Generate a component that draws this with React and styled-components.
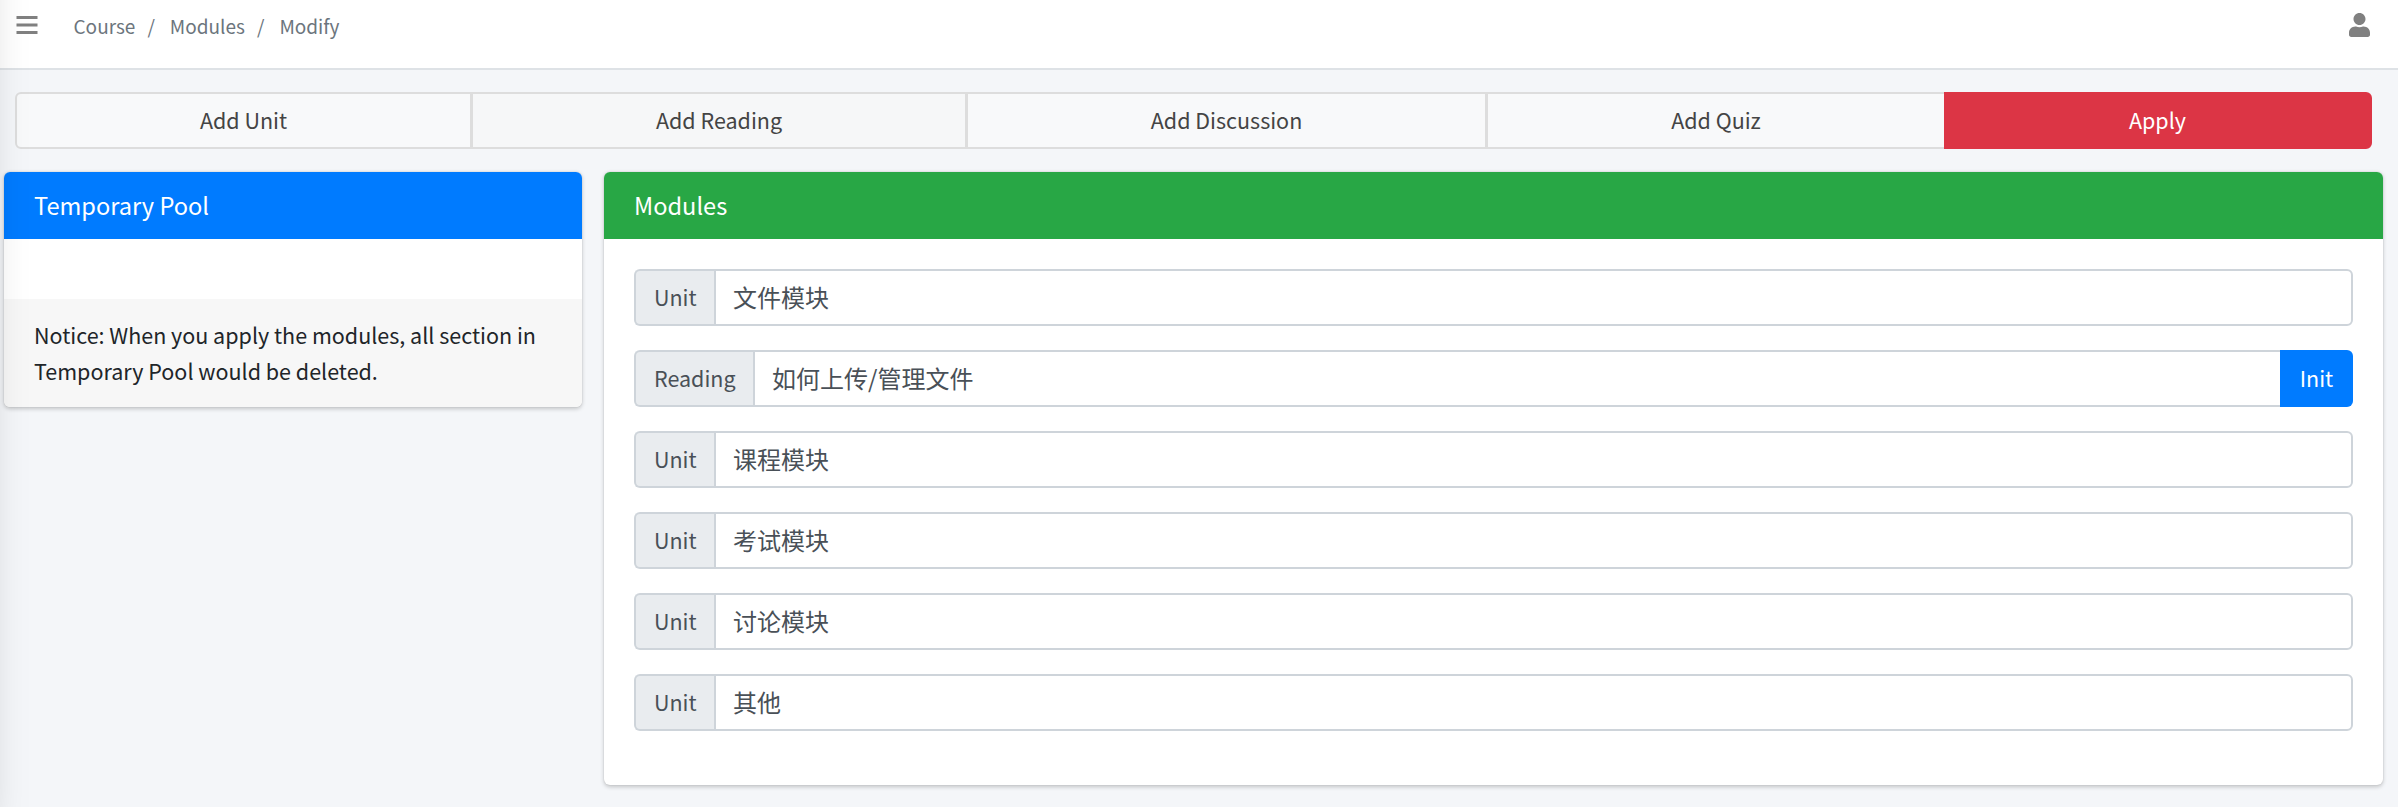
import React from "react";
import styled, { createGlobalStyle, css } from "styled-components";

const GlobalStyle = createGlobalStyle`
  *, *::before, *::after { box-sizing: border-box; }
  body {
    margin: 0;
    background: #f4f6f9;
    color: #212529;
    font-family: "Noto Sans CJK SC", "Noto Sans", sans-serif;
    font-size: 21.5px;
    line-height: 36px;
    overflow: hidden;
  }
`;

const Page = styled.div`
  min-height: 807px;
`;

/* Collapsed off-canvas sidebar; only its shadow reaches the page. */
const Sidebar = styled.aside`
  position: fixed;
  top: -70px;
  bottom: 0;
  left: -394px;
  width: 375px;
  box-shadow: 0 21px 42px rgba(0, 0, 0, 0.25), 0 15px 15px rgba(0, 0, 0, 0.22);
  pointer-events: none;
  z-index: 10;
`;

const Navbar = styled.header`
  display: flex;
  justify-content: space-between;
  height: 70px;
  padding: 0 26px 0 16px;
  background: #fff;
  border-bottom: 2px solid #dee2e6;
`;

const NavStart = styled.div`
  display: flex;
  align-items: flex-start;
`;

const MenuIcon = styled.svg`
  display: block;
  width: 22px;
  height: 20px;
  margin-top: 15px;
  fill: #808080;
`;

const UserIcon = styled.svg`
  display: block;
  width: 21px;
  height: 24px;
  margin: 13px 2px 0 0;
  fill: #808080;
`;

const Breadcrumb = styled.ol`
  display: flex;
  margin: 8px 0 0 35.5px;
  padding: 0;
  list-style: none;
  color: #6c757d;
  font-size: 19px;
  line-height: 36px;
`;

const Crumb = styled.li`
  & + &::before {
    content: "/";
    padding: 0 15px 0 12px;
  }
`;

const ButtonGroup = styled.div`
  display: flex;
  height: 57px;
  margin: 22px 26px 23px 15px;
`;

const ToolButton = styled.button`
  flex: 0 0 ${(p) => p.$width}px;
  margin: 0;
  padding: 0 0 2px;
  border: 2px solid #ddd;
  border-left-width: 1px;
  background: ${(p) => (p.$hover ? "#f6f7f8" : "#f8f9fa")};
  color: #444;
  font: inherit;

  &:first-child {
    border-left-width: 2px;
    border-radius: 6px 0 0 6px;
  }
  &:nth-last-child(2) {
    border-right-width: 0;
  }
  &:last-child {
    border-radius: 0 6px 6px 0;
  }
  ${(p) =>
    p.$danger &&
    css`
      flex: 1;
      background: #dc3545;
      border-color: #dc3545;
      color: #fff;
    `}
`;

const Columns = styled.main`
  display: grid;
  grid-template-columns: 578px 1779px;
  column-gap: 22px;
  align-items: start;
  padding-left: 4px;
`;

const Card = styled.section`
  overflow: hidden;
  border-radius: 6px;
  background: #fff;
  box-shadow: 0 0 1.5px rgba(0, 0, 0, 0.125), 0 1.5px 4.5px rgba(0, 0, 0, 0.2);
`;

const CardHeader = styled.h3`
  height: 67px;
  margin: 0;
  padding: 15px 30px 0;
  background: ${(p) => p.$color};
  color: #fff;
  font-size: 23.6px;
  font-weight: 400;
  line-height: 36px;
`;

const CardBody = styled.div`
  display: flex;
  flex-direction: column;
  gap: 24px;
  height: ${(p) => p.$height}px;
  padding: 30px;
`;

const CardFooter = styled.footer`
  height: 108px;
  padding: 18px 30px;
  background: #f7f7f7;
`;

const ModuleRow = styled.div`
  display: flex;
  height: 57px;
`;

const Label = styled.span`
  display: flex;
  align-items: center;
  flex: 0 0 ${(p) => p.$width}px;
  padding: 0 0 2px 18px;
  border: 2px solid #ced4da;
  border-right: 0;
  border-radius: 6px 0 0 6px;
  background: #e9ecef;
  color: #495057;
`;

const Field = styled.div`
  display: flex;
  align-items: center;
  flex: 1;
  padding: 0 0 1px 17px;
  border: 2px solid #ced4da;
  border-right-width: ${(p) => (p.$joined ? 0 : 2)}px;
  border-radius: ${(p) => (p.$joined ? "0" : "0 6px 6px 0")};
  background: #fff;
  color: #495057;
  font-size: 24px;
`;

const InitButton = styled.button`
  width: 73px;
  padding: 0 0 2px;
  border: 0;
  border-radius: 0 6px 6px 0;
  background: #007bff;
  color: #fff;
  font: inherit;
`;

const modules = [
  { kind: "Unit", name: "文件模块" },
  { kind: "Reading", name: "如何上传/管理文件" },
  { kind: "Unit", name: "课程模块" },
  { kind: "Unit", name: "考试模块" },
  { kind: "Unit", name: "讨论模块" },
  { kind: "Unit", name: "其他" },
];

export default function App() {
  return (
    <Page>
      <GlobalStyle />
      <Sidebar />
      <Navbar>
        <NavStart>
          <MenuIcon viewBox="0 0 22 20">
            <path d="M.5 1h21v3H.5zM.5 8.5h21v3H.5zM.5 16h21v3H.5z" />
          </MenuIcon>
          <Breadcrumb>
            <Crumb>Course</Crumb>
            <Crumb>Modules</Crumb>
            <Crumb>Modify</Crumb>
          </Breadcrumb>
        </NavStart>
        <UserIcon viewBox="0 0 448 512">
          <path d="M224 256c70.7 0 128-57.3 128-128S294.700 0 224 0 96 57.300 96 128s57.300 128 128 128zm89.600 32h-16.700c-22.200 10.200-46.900 16-72.900 16s-50.600-5.800-72.900-16h-16.700C60.200 288 0 348.200 0 422.400V464c0 26.500 21.500 48 48 48h352c26.500 0 48-21.500 48-48v-41.600c0-74.200-60.200-134.400-134.400-134.400z" />
        </UserIcon>
      </Navbar>
      <ButtonGroup>
        <ToolButton $width={457}>Add Unit</ToolButton>
        <ToolButton $width={495} $hover>Add Reading</ToolButton>
        <ToolButton $width={520}>Add Discussion</ToolButton>
        <ToolButton $width={457}>Add Quiz</ToolButton>
        <ToolButton $danger>Apply</ToolButton>
      </ButtonGroup>
      <Columns>
        <Card>
          <CardHeader $color="#007bff">Temporary Pool</CardHeader>
          <CardBody $height={60} />
          <CardFooter>
            Notice: When you apply the modules, all section in Temporary Pool would be deleted.
          </CardFooter>
        </Card>
        <Card>
          <CardHeader $color="#28a745">Modules</CardHeader>
          <CardBody $height={546}>
            {modules.map(({ kind, name }) => (
              <ModuleRow key={name}>
                <Label $width={kind === "Reading" ? 119 : 80}>{kind}</Label>
                <Field $joined={kind === "Reading"}>{name}</Field>
                {kind === "Reading" && <InitButton>Init</InitButton>}
              </ModuleRow>
            ))}
          </CardBody>
        </Card>
      </Columns>
    </Page>
  );
}
